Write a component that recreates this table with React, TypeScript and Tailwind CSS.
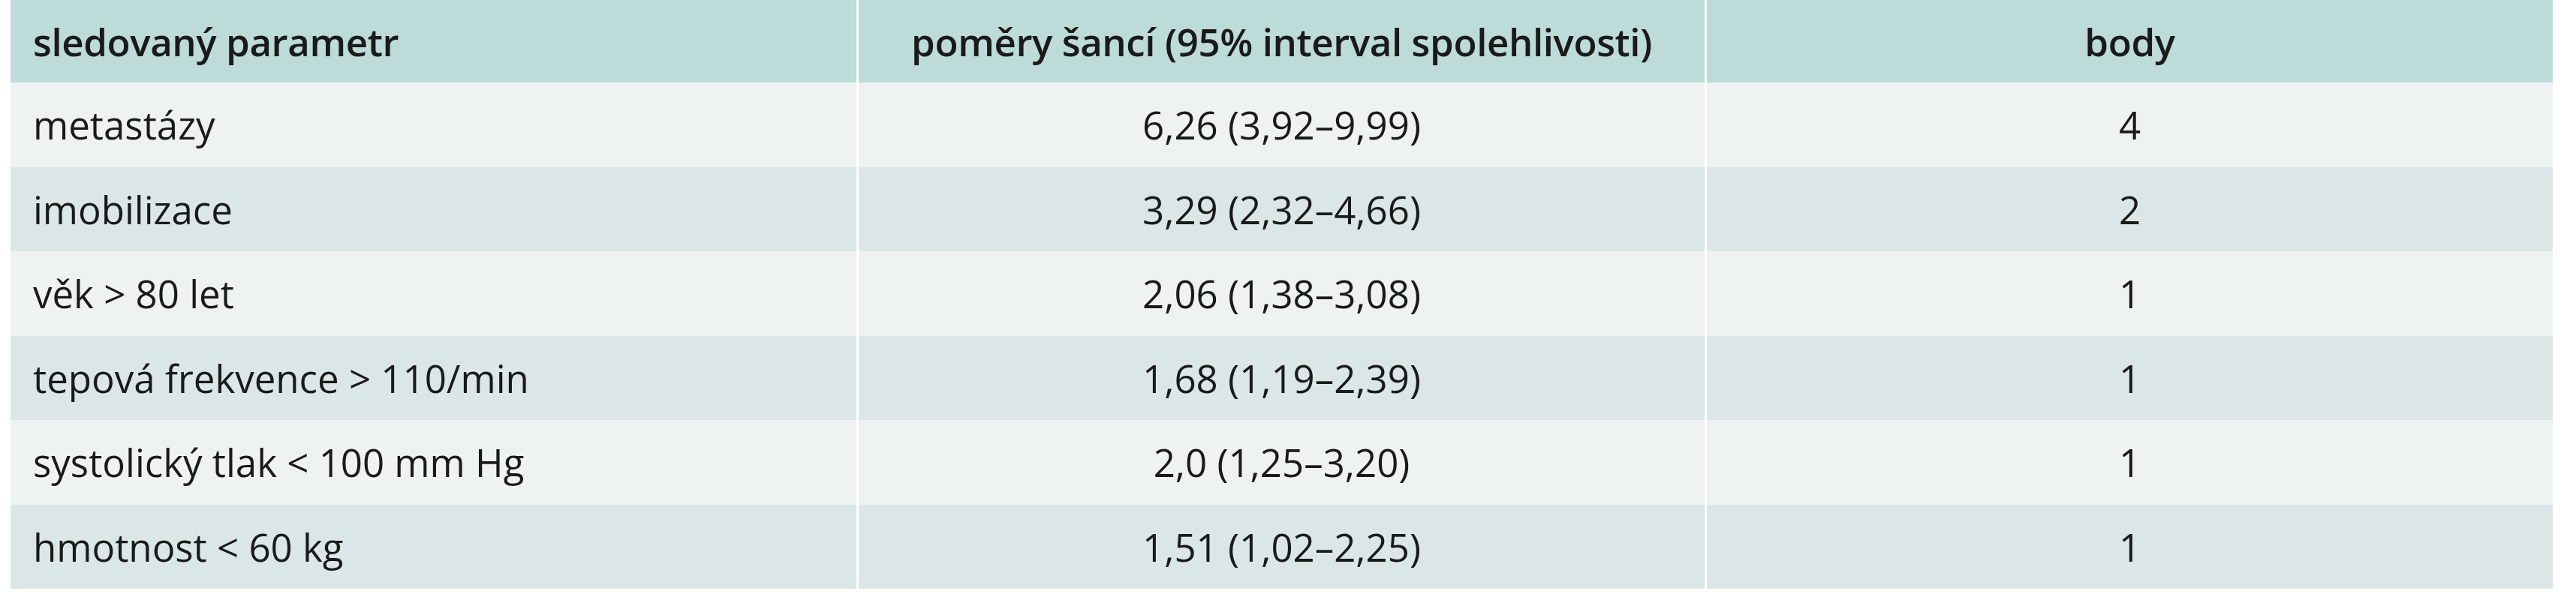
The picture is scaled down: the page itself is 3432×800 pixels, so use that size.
import React from "react";

const rows: [string, string, string][] = [
  ["metastázy", "6,26 (3,92–9,99)", "4"],
  ["imobilizace", "3,29 (2,32–4,66)", "2"],
  ["věk > 80 let", "2,06 (1,38–3,08)", "1"],
  ["tepová frekvence > 110/min", "1,68 (1,19–2,39)", "1"],
  ["systolický tlak < 100 mm Hg", "2,0 (1,25–3,20)", "1"],
  ["hmotnost < 60 kg", "1,51 (1,02–2,25)", "1"],
];

export default function App() {
  return (
    <div className="w-[3432px] h-[800px] bg-white pl-[14px] font-['Open_Sans',sans-serif] text-[51px] text-[#1a1a1a]">
      <div className="w-[3387px] grid grid-cols-3 gap-x-[3px]">
        <div className="h-[110px] bg-[#bddbd8] flex items-center pl-[30px] font-semibold tracking-[-0.4px]">
          sledovaný parametr
        </div>
        <div className="h-[110px] bg-[#bddbd8] flex items-center justify-center font-semibold tracking-[-0.4px]">
          poměry šancí (95% interval spolehlivosti)
        </div>
        <div className="h-[110px] bg-[#bddbd8] flex items-center justify-center font-semibold tracking-[-0.4px]">
          body
        </div>
        {rows.map((r, i) => {
          const bg = i % 2 === 0 ? "bg-[#eef3f2]" : "bg-[#dbe7e7]";
          return (
            <React.Fragment key={i}>
              <div className={`h-[112.5px] ${bg} flex items-center pl-[30px]`}>{r[0]}</div>
              <div className={`h-[112.5px] ${bg} flex items-center justify-center`}>{r[1]}</div>
              <div className={`h-[112.5px] ${bg} flex items-center justify-center`}>{r[2]}</div>
            </React.Fragment>
          );
        })}
      </div>
    </div>
  );
}
